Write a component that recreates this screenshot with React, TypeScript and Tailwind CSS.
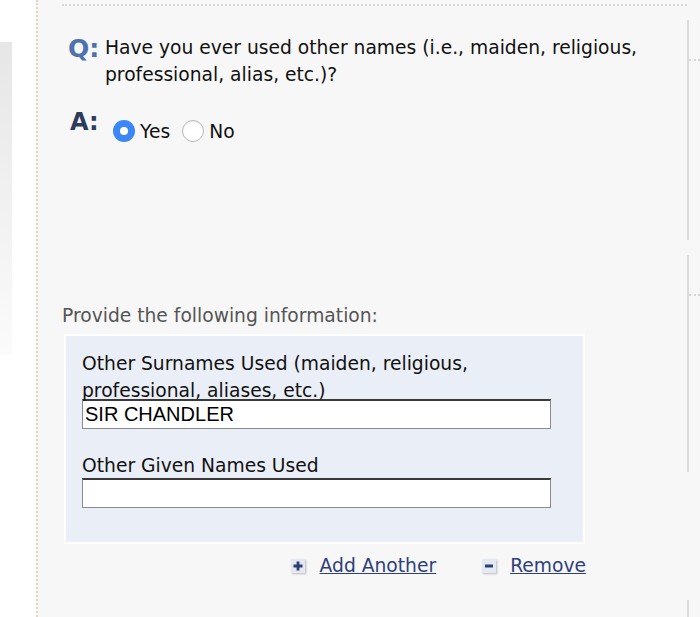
import React from 'react';

const FONT = { fontFamily: '"DejaVu Sans", Verdana, sans-serif' };

function Radio({ checked, label }: { checked?: boolean; label: string }) {
  return (
    <label className="flex items-end gap-[5px]">
      {checked ? (
        <span className="flex h-[22px] w-[22px] items-center justify-center rounded-full bg-[#3d86f6]">
          <span className="h-[8px] w-[8px] rounded-full bg-white" />
        </span>
      ) : (
        <span className="h-[22px] w-[22px] rounded-full border border-[#b9b9b9] bg-white shadow-[inset_0_1px_1px_rgba(0,0,0,0.08)]" />
      )}
      <span className="text-[18.7px] leading-[20px] text-[#111]">{label}</span>
    </label>
  );
}

function IconBox({ minus }: { minus?: boolean }) {
  return (
    <span className="flex h-[14px] w-[14px] items-center justify-center bg-[#e3e8f1] shadow-[1px_1px_2px_rgba(0,0,0,0.25)]">
      <svg width="10" height="10" viewBox="0 0 10 10">
        {minus ? (
          <rect x="1" y="3.5" width="8" height="3" fill="#2f3f72" />
        ) : (
          <path d="M3.6 0.5h2.8v3.1h3.1v2.8H6.4v3.1H3.6V6.4H0.5V3.6h3.1z" fill="#2f3f72" />
        )}
      </svg>
    </span>
  );
}

function SidePanel({ height }: { height: string }) {
  return (
    <div className={`${height} border-l-2 border-[#dcdcdc] pt-[39px]`}>
      <div className="border-t-2 border-dotted border-[#d6d6d6]" />
    </div>
  );
}

export default function App() {
  return (
    <div className="flex h-[617px] w-[700px] overflow-hidden bg-white" style={FONT}>
      <div className="w-[36px] shrink-0 pt-[42px]">
        <div className="h-[313px] w-[12px] bg-gradient-to-b from-[#e6e6e6] to-[#fbfbfb]" />
      </div>

      <div className="flex flex-1 border-l-2 border-dotted border-[#e3d6c4] bg-[#f7f7f7]">
        <div className="flex-1 pl-[24px] pt-[4px]">
          <div className="border-t-2 border-dotted border-[#d9d9d9]" />

          <div className="flex pl-[6px] pt-[29px]">
            <span className="w-[37px] shrink-0 text-[25px] font-bold leading-[28px] text-[#4e72ad]">Q:</span>
            <p className="-mt-[1px] text-[18.7px] leading-[27px] text-[#111]">
              Have you ever used other names (i.e., maiden, religious,
              <br />
              professional, alias, etc.)?
            </p>
          </div>

          <div className="flex items-start pl-[8px] pt-[20px]">
            <span className="w-[43px] shrink-0 text-[24px] font-bold leading-[28px] text-[#2e3b5c]">A:</span>
            <div className="flex gap-[12px] pt-[12px]">
              <Radio checked label="Yes" />
              <Radio label="No" />
            </div>
          </div>

          <p className="pt-[162px] text-[18.7px] leading-[24px] text-[#555]">Provide the following information:</p>

          <div className="ml-[2px] mt-[6px] w-[521px] border-2 border-white bg-[#eaeef6] pb-[34px] pl-[16px] pt-[14px]">
            <p className="text-[18.7px] leading-[27px] text-[#111]">
              Other Surnames Used (maiden, religious,
              <br />
              professional, aliases, etc.)
            </p>
            <div
              className="-mt-[5px] h-[30px] w-[469px] border border-t-2 border-[#8a8a8a] border-t-[#3a3a3a] bg-white pl-[2px] text-[20px] leading-[26px] text-black"
              style={{ fontFamily: '"Liberation Sans", Arial, sans-serif' }}
            >
              SIR CHANDLER
            </div>
            <p className="pt-[25px] text-[18.7px] leading-[24px] text-[#111]">Other Given Names Used</p>
            <div className="h-[30px] w-[469px] border border-t-2 border-[#8a8a8a] border-t-[#3a3a3a] bg-white" />
          </div>

          <div className="flex w-[524px] justify-end gap-[46px] pt-[8px]">
            <a className="flex items-center gap-[15px] text-[18.7px] text-[#2f3f7a] underline" href="#">
              <IconBox />
              Add Another
            </a>
            <a className="flex items-center gap-[14px] text-[18.7px] text-[#2f3f7a] underline" href="#">
              <IconBox minus />
              Remove
            </a>
          </div>
        </div>

        <div className="w-[13px] shrink-0 pt-[20px]">
          <SidePanel height="h-[220px]" />
          <div className="h-[15px]" />
          <SidePanel height="h-[217px]" />
          <div className="h-[128px]" />
          <div className="h-[20px] border-l-2 border-[#dcdcdc]" />
        </div>
      </div>
    </div>
  );
}
